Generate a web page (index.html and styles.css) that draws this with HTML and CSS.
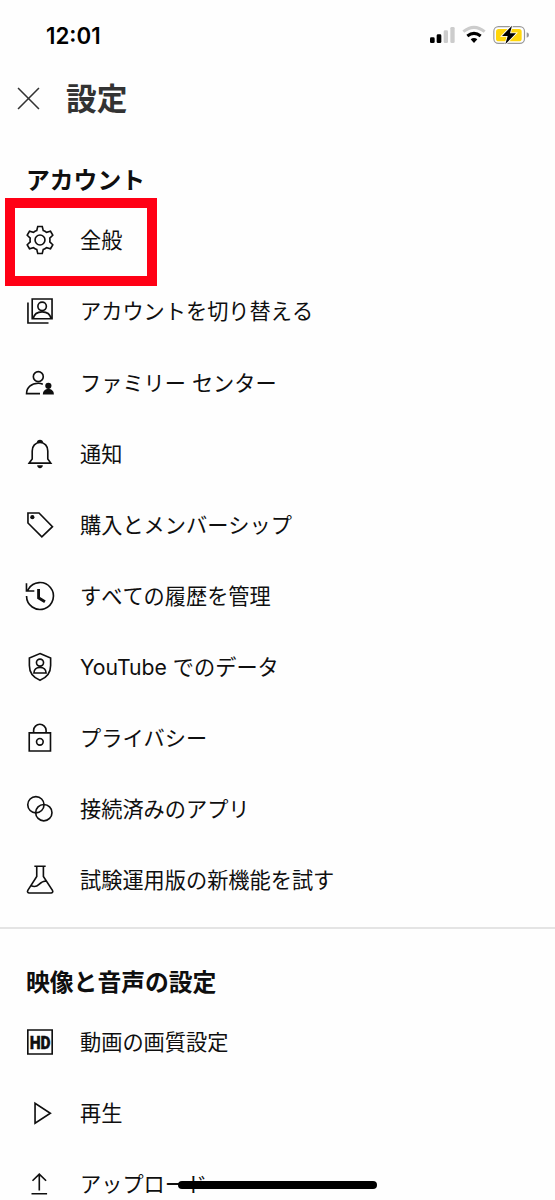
FILE: index.html
```html
<!DOCTYPE html>
<html lang="ja">
<head>
<meta charset="utf-8">
<title>設定</title>
<link rel="stylesheet" href="styles.css">
</head>
<body>
<main class="screen">
  <div class="status">
    <span class="time">12:01</span>
    <svg class="indicators" viewBox="90 45 300 60">
      <rect x="90" y="82" width="14" height="17" rx="4"/>
      <rect x="110" y="73" width="14" height="26" rx="4"/>
      <rect class="dim" x="131" y="61" width="13" height="38" rx="4"/>
      <rect class="dim" x="151" y="51" width="13" height="48" rx="4"/>
      <path class="wifi dim-line" d="M190 65Q222 39 254 65"/>
      <path class="wifi" d="M202 78Q222 62 242 78"/>
      <path d="M212 88Q222 80 232 88L222 99Z"/>
      <rect class="battery" x="281.500" y="50" width="92" height="50" rx="14"/>
      <path class="nub" d="M380 67q7 2 7 8t-7 8z"/>
      <rect class="charge" x="288" y="57" width="77" height="37" rx="8"/>
      <path class="bolt" d="M336 47L306 78H323L316 103L348 70H330Z"/>
    </svg>
  </div>

  <header class="header">
    <svg class="close" viewBox="0 0 22 22"><path d="M1 1L21 21M21 1L1 21"/></svg>
    <h1 class="title">設定</h1>
  </header>

  <section class="section">
    <h2 class="heading">アカウント</h2>
    <ul class="list">
      <li class="row marked">
        <svg class="icon" viewBox="0 0 24 24"><circle cx="12" cy="12" r="3.500"/><path d="M10.400 2.500h3.200l.7 2.850c.9.300 1.600.700 2.300 1.280l2.820-.8 1.600 2.790-2.100 2.040c.14.900.14 1.780 0 2.680l2.100 2.040-1.600 2.790-2.820-.8c-.7.580-1.400.980-2.300 1.280l-.7 2.850h-3.200l-.7-2.850c-.9-.3-1.600-.7-2.300-1.280l-2.820.8-1.600-2.790 2.100-2.040c-.14-.9-.14-1.780 0-2.680l-2.100-2.040 1.600-2.790 2.820.8c.7-.58 1.400-.98 2.300-1.280z"/></svg>
        <span class="label">全般</span>
      </li>
      <li class="row">
        <svg class="icon" viewBox="0 0 24 24"><path d="M6.500 3.500h14v14h-14zM3.500 6v14.500H18M7.200 17.300c.6-2.900 3-4.700 6.300-4.700s5.700 1.800 6.300 4.700"/><circle cx="13.500" cy="8.700" r="3"/></svg>
        <span class="label">アカウントを切り替える</span>
      </li>
      <li class="row">
        <svg class="icon" viewBox="0 0 24 24"><circle cx="10.800" cy="7.500" r="3.500"/><path d="M12 19.500H2.500c0-4.600 3.400-7.300 8.300-7.300 1.200 0 2.200.2 3.200.6"/><circle class="solid" cx="17.900" cy="14" r="2.200"/><path class="solid" d="M14 20.200c0-2.600 1.600-3.900 3.900-3.900s3.900 1.300 3.900 3.900z"/></svg>
        <span class="label">ファミリー センター</span>
      </li>
      <li class="row">
        <svg class="icon" viewBox="0 0 24 24"><path d="M4.400 18.400L6.500 15.500V9.800C6.500 6.400 8.700 3.900 12 3.900s5.500 2.500 5.500 5.900v5.700l2.100 2.900z"/><path class="solid" d="M9.700 4.300C9.800 2.800 10.700 2 12 2s2.200.8 2.300 2.300zM10 20h4c0 1.200-.8 2-2 2s-2-.8-2-2z"/></svg>
        <span class="label">通知</span>
      </li>
      <li class="row">
        <svg class="icon" viewBox="0 0 24 24"><path d="M3.500 3.500h7.800l9.500 9.700-7.500 7.200-9.800-9.800z"/><circle class="solid" cx="6.600" cy="6.500" r="1.500"/></svg>
        <span class="label">購入とメンバーシップ</span>
      </li>
      <li class="row">
        <svg class="icon" viewBox="0 0 24 24"><path class="solid" d="M14.970 16.950 10 13.870V7h2v5.760l4.030 2.490-1.060 1.700z"/><path d="M2.500 12a9.500 9.500 0 1 0 1.350-4.880L3.400 8M2.450 3v5.500H8"/></svg>
        <span class="label">すべての履歴を管理</span>
      </li>
      <li class="row">
        <svg class="icon" viewBox="0 0 24 24"><path d="M12 2.500l7.500 3.100V11c0 4.700-2.900 8.600-7.500 10.400C7.400 19.600 4.500 15.700 4.500 11V5.600zM7.700 16.200c0-2.300 1.800-3.900 4.300-3.900s4.300 1.600 4.300 3.900z"/><circle cx="12" cy="8.900" r="2.500"/></svg>
        <span class="label latin">YouTube でのデータ</span>
      </li>
      <li class="row">
        <svg class="icon" viewBox="0 0 24 24"><path d="M4.400 8.400h15v12.800h-15zM7.500 8.400V6.600a4.400 4.300 0 0 1 8.800 0v1.800"/><circle cx="11.900" cy="14.700" r="2.350"/></svg>
        <span class="label">プライバシー</span>
      </li>
      <li class="row">
        <svg class="icon" viewBox="0 0 24 24"><circle cx="9.100" cy="9" r="5.750"/><circle cx="14.700" cy="14.600" r="5.750"/></svg>
        <span class="label">接続済みのアプリ</span>
      </li>
      <li class="row">
        <svg class="icon" viewBox="0 0 24 24"><path d="M8 2.300h8M9.700 2.300v7.200L3.400 19.300c-.6 1 0 1.900 1 1.900h15.400c1 0 1.600-.9 1-1.900L14.400 9.500V2.300M5.600 15.900c2.200 1.200 3.900 1 5.700-.8 1.500-1.500 2.900-2.400 5-2.400"/></svg>
        <span class="label">試験運用版の新機能を試す</span>
      </li>
    </ul>
  </section>

  <section class="section second">
    <h2 class="heading">映像と音声の設定</h2>
    <ul class="list">
      <li class="row">
        <svg class="icon" viewBox="0 0 24 24"><path d="M3.400 3.500h17.200v17H3.400z"/><text class="hd" x="4.700" y="16.700" textLength="14.800" lengthAdjust="spacingAndGlyphs">HD</text></svg>
        <span class="label">動画の画質設定</span>
      </li>
      <li class="row">
        <svg class="icon" viewBox="0 0 24 24"><path d="M8.500 5.200v14l10.800-7z"/></svg>
        <span class="label">再生</span>
      </li>
      <li class="row">
        <svg class="icon" viewBox="0 0 24 24"><path d="M6 18.900h11M11.500 16.500V5M6.700 9.700l4.800-4.700 4.800 4.700"/></svg>
        <span class="label">アップロード</span>
      </li>
    </ul>
  </section>
  <div class="home-indicator"></div>
</main>
</body>
</html>
```

FILE: styles.css
```css
* { box-sizing: border-box; }
body { margin: 0; background: #fff; }
.screen {
  position: relative;
  width: 555px;
  height: 1200px;
  overflow: hidden;
  background: #fefefe;
  color: #0f0f0f;
  font-family: Inter, "Noto Sans CJK JP", sans-serif;
  font-kerning: none;
}
.status {
  display: flex;
  align-items: center;
  justify-content: space-between;
  height: 70px;
  padding: 0 25px 0 46px;
}
.time { font-size: 22.300px; font-weight: 600; color: #000; }
.indicators { width: 100px; height: 20px; }
.dim { fill: #ccc; }
.wifi { fill: none; stroke: #000; stroke-width: 9; }
.dim-line { stroke: #ccc; }
.battery { fill: none; stroke: #999; stroke-width: 3.500; }
.nub { fill: #999; }
.charge { fill: #ffd60a; }
.bolt { stroke: #fff; stroke-width: 5; paint-order: stroke; }

.header {
  display: flex;
  align-items: center;
  gap: 26px;
  height: 56px;
  padding-left: 17px;
}
.close { width: 23px; height: 23px; fill: none; stroke: #333; stroke-width: 1.500; }
.title { margin: 0; padding-top: 2px; font-size: 30.700px; line-height: 56px; font-weight: 700; color: #333; }

.section { padding: 29.200px 0 11.500px; border-bottom: 2px solid #e4e4e4; }
.second { padding-top: 27.700px; border-bottom: 0; }
.heading {
  margin: 0;
  padding: 3px 0 0 26px;
  font-size: 23.800px;
  line-height: 46.500px;
  font-weight: 700;
}
.list { margin: 0; padding: 0; list-style: none; }
.row {
  position: relative;
  display: flex;
  align-items: center;
  gap: 23px;
  height: 71.130px;
  padding-left: 23px;
}
.icon {
  width: 34px;
  height: 34px;
  fill: none;
  stroke: #0f0f0f;
  stroke-width: 1.150;
}
.solid { fill: #0f0f0f; stroke: none; }
.hd { font: 900 13.200px Roboto, sans-serif; fill: #0f0f0f; stroke: #0f0f0f; stroke-width: .25; }
.label { font-size: 21.200px; line-height: 32px; white-space: pre; }
.latin { font-kerning: normal; }
.marked::after {
  content: "";
  box-sizing: border-box;
  position: absolute;
  left: 5px;
  top: -7px;
  width: 152px;
  height: 88.500px;
  border: 10px solid #ff0015;
}
.home-indicator {
  position: absolute;
  left: 178px;
  top: 1181px;
  width: 199px;
  height: 8px;
  border-radius: 4px;
  background: #000;
}
```
